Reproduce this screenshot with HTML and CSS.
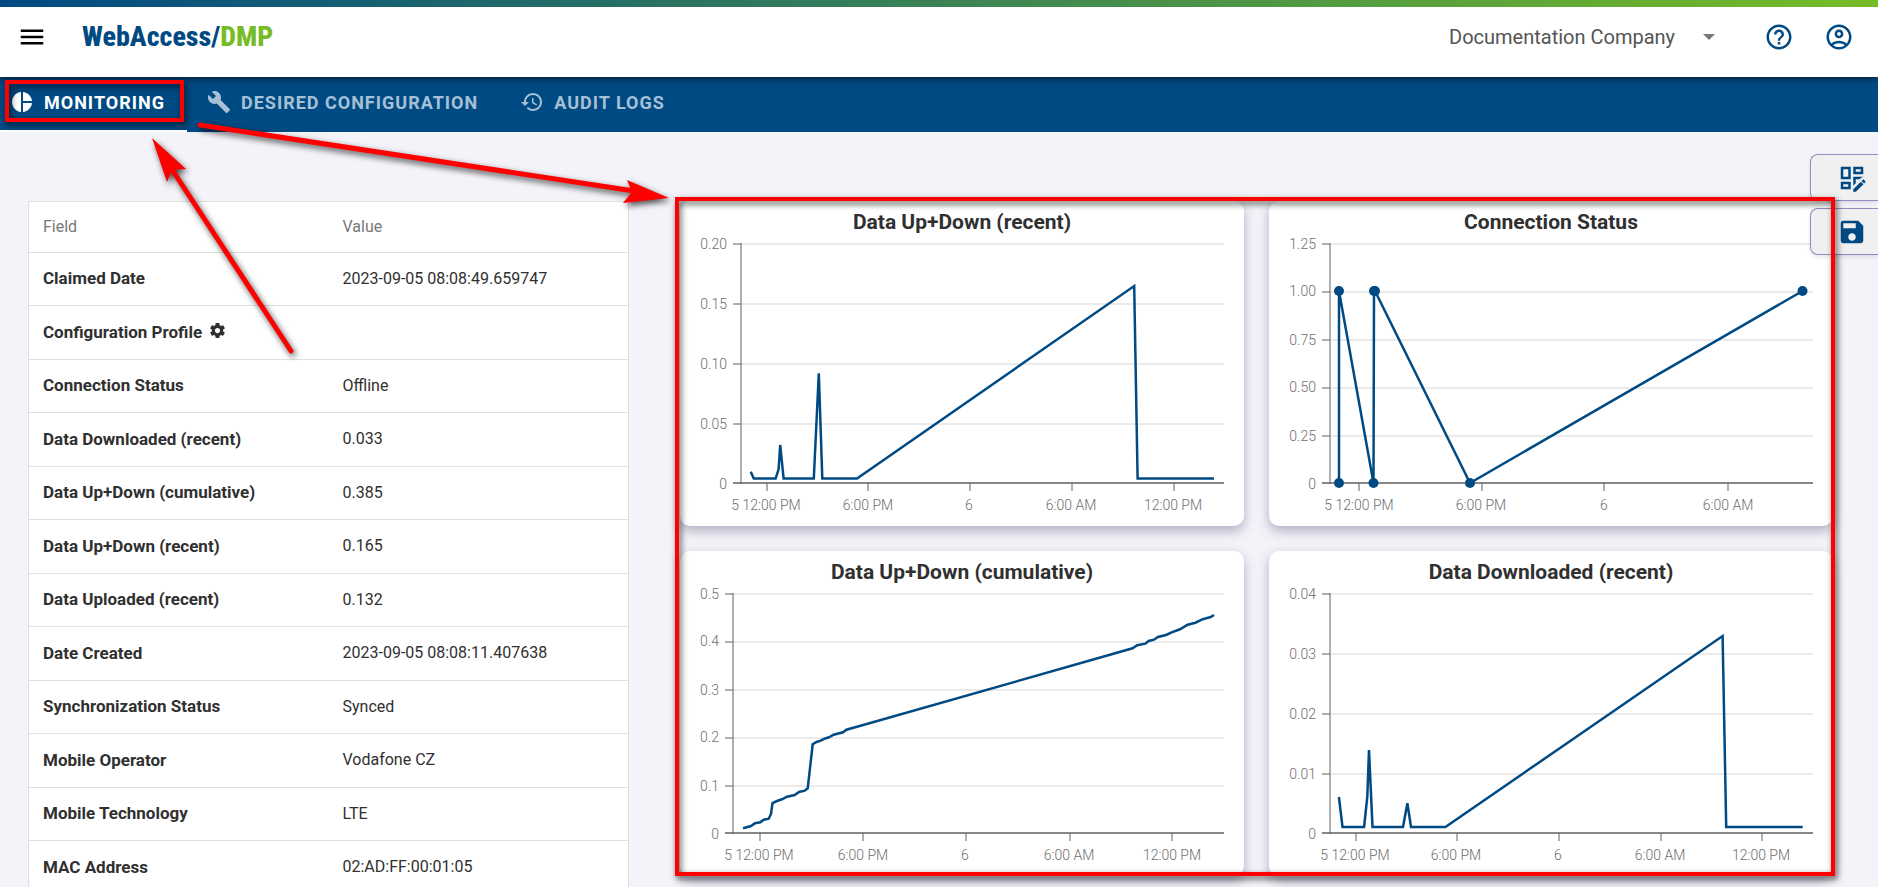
FILE: index.html
```html
<!DOCTYPE html>
<html lang="en">
<head>
<meta charset="utf-8">
<title>WebAccess/DMP</title>
<link rel="stylesheet" href="styles.css">
</head>
<body>
<div class="page">
  <header class="topbar">
    <button class="icon-btn menu-btn" aria-label="Menu"><svg class="icon" viewBox="0 0 24 24"><path d="M3 18h18v-2H3v2zm0-5h18v-2H3v2zm0-7v2h18V6H3z"/></svg></button>
    <a class="logo" href="#">WebAccess/<span class="logo-accent">DMP</span></a>
    <div class="company">
      <select class="company-select" aria-label="Company"><option>Documentation Company</option></select>
      <svg class="company-caret" viewBox="0 0 12 6"><path d="M0 0h12L6 6z"/></svg>
    </div>
    <button class="icon-btn" aria-label="Help"><svg class="icon" viewBox="0 0 24 24"><path d="M11 18h2v-2h-2v2zm1-16C6.480 2 2 6.480 2 12s4.480 10 10 10 10-4.480 10-10S17.520 2 12 2zm0 18c-4.410 0-8-3.590-8-8s3.590-8 8-8 8 3.590 8 8-3.590 8-8 8zm0-14c-2.210 0-4 1.790-4 4h2c0-1.100.9-2 2-2s2 .9 2 2c0 2-3 1.750-3 5h2c0-2.250 3-2.500 3-5 0-2.210-1.790-4-4-4z"/></svg></button>
    <button class="icon-btn" aria-label="Account"><svg class="icon" viewBox="0 0 24 24"><path d="M12 2C6.480 2 2 6.480 2 12s4.480 10 10 10 10-4.480 10-10S17.520 2 12 2zM7.350 18.500C8.660 17.560 10.260 17 12 17s3.340.56 4.650 1.500C15.340 19.440 13.740 20 12 20s-3.340-.56-4.650-1.500zm10.790-1.380C16.450 15.800 14.320 15 12 15s-4.450.8-6.140 2.120C4.700 15.730 4 13.950 4 12c0-4.420 3.580-8 8-8s8 3.580 8 8c0 1.950-.7 3.730-1.860 5.120zM12 6c-1.930 0-3.500 1.570-3.500 3.500S10.070 13 12 13s3.500-1.570 3.500-3.500S13.930 6 12 6zm0 5c-.83 0-1.500-.67-1.500-1.500S11.170 8 12 8s1.500.67 1.500 1.500S12.830 11 12 11z"/></svg></button>
  </header>

  <nav class="tabs">
    <a class="tab tab-active" href="#monitoring"><svg class="tab-icon" viewBox="0 0 24 24"><path d="M11 2v20c-5.070-.5-9-4.790-9-10s3.930-9.500 9-10zm2.030 0v8.990H22c-.47-4.740-4.240-8.520-8.970-8.990zm0 11.010V22c4.740-.47 8.500-4.250 8.970-8.990h-8.970z"/></svg>MONITORING</a>
    <a class="tab" href="#desired"><svg class="tab-icon" viewBox="0 0 24 24"><path d="M22.700 19l-9.100-9.100c.9-2.300.4-5-1.500-6.900-2-2-5-2.400-7.400-1.300L9 6 6 9 1.600 4.700C.4 7.100.9 10.100 2.900 12.100c1.900 1.900 4.600 2.400 6.900 1.500l9.100 9.100c.4.4 1 .4 1.400 0l2.300-2.300c.5-.4.5-1.100.1-1.400z"/></svg>DESIRED CONFIGURATION</a>
    <a class="tab" href="#audit"><svg class="tab-icon" viewBox="0 0 24 24"><path d="M13 3c-4.970 0-9 4.030-9 9H1l3.890 3.890.07.14L9 12H6c0-3.870 3.130-7 7-7s7 3.130 7 7-3.130 7-7 7c-1.930 0-3.680-.79-4.940-2.060l-1.420 1.420C8.270 19.990 10.510 21 13 21c4.970 0 9-4.030 9-9s-4.030-9-9-9zm-1 5v5l4.280 2.540.72-1.210-3.500-2.080V8H12z"/></svg>AUDIT LOGS</a>
  </nav>

  <main class="content">
    <table class="fields">
      <thead><tr><th scope="col">Field</th><th scope="col">Value</th></tr></thead>
      <tbody>
        <tr><th scope="row">Claimed Date</th><td>2023-09-05 08:08:49.659747</td></tr>
        <tr><th scope="row">Configuration Profile <svg class="gear" viewBox="2 2 20 20"><path d="M19.430 12.980c.04-.32.07-.64.07-.98s-.03-.66-.07-.98l2.110-1.650c.19-.15.24-.42.12-.64l-2-3.460c-.12-.22-.39-.3-.61-.22l-2.490 1c-.52-.4-1.080-.73-1.690-.98l-.38-2.650C14.460 2.180 14.250 2 14 2h-4c-.25 0-.46.18-.49.42l-.38 2.650c-.61.25-1.170.59-1.690.98l-2.490-1c-.23-.09-.49 0-.61.22l-2 3.460c-.13.22-.07.49.12.64l2.110 1.650c-.04.32-.07.65-.07.98s.03.66.07.98l-2.110 1.650c-.19.15-.24.42-.12.64l2 3.460c.12.22.39.3.61.22l2.490-1c.52.4 1.080.73 1.690.98l.38 2.650c.03.24.24.42.49.42h4c.25 0 .46-.18.49-.42l.38-2.650c.61-.25 1.170-.59 1.690-.98l2.490 1c.23.09.49 0 .61-.22l2-3.460c.12-.22.07-.49-.12-.64l-2.110-1.650zM12 15.500c-1.930 0-3.500-1.570-3.500-3.500s1.570-3.500 3.500-3.500 3.500 1.570 3.500 3.500-1.570 3.500-3.500 3.500z"/></svg></th><td></td></tr>
        <tr><th scope="row">Connection Status</th><td>Offline</td></tr>
        <tr><th scope="row">Data Downloaded (recent)</th><td>0.033</td></tr>
        <tr><th scope="row">Data Up+Down (cumulative)</th><td>0.385</td></tr>
        <tr><th scope="row">Data Up+Down (recent)</th><td>0.165</td></tr>
        <tr><th scope="row">Data Uploaded (recent)</th><td>0.132</td></tr>
        <tr><th scope="row">Date Created</th><td>2023-09-05 08:08:11.407638</td></tr>
        <tr><th scope="row">Synchronization Status</th><td>Synced</td></tr>
        <tr><th scope="row">Mobile Operator</th><td>Vodafone CZ</td></tr>
        <tr><th scope="row">Mobile Technology</th><td>LTE</td></tr>
        <tr><th scope="row">MAC Address</th><td>02:AD:FF:00:01:05</td></tr>
      </tbody>
    </table>

    <div class="charts">
      <section class="card">
        <svg class="chart" viewBox="0 0 564 325" role="img" aria-label="Data Up+Down (recent)">
          <text class="title" x="282" y="28">Data Up+Down (recent)</text>
          <path class="grid" d="M61 43H544M61 103H544M61 163H544M61 223H544"/>
          <path class="axis" d="M61 42V283M53 43H61M53 103H61M53 163H61M53 223H61M53 282H544M53 282H544M87 282V290M188 282V290M290 282V290M392 282V290M494 282V290"/>
          <g class="ylabels"><text x="47" y="48">0.20</text><text x="47" y="108">0.15</text><text x="47" y="168">0.10</text><text x="47" y="228">0.05</text><text x="47" y="288">0</text></g>
          <g class="xlabels"><text x="86" y="309">5 12:00 PM</text><text x="188" y="309">6:00 PM</text><text x="289" y="309">6</text><text x="391" y="309">6:00 AM</text><text x="493" y="309">12:00 PM</text></g>
          <polyline class="series" points="70.7,270.7 73.8,277.5 95.6,277.5 98.6,268.3 100.2,244 103.6,277.5 133.8,277.5 138.8,172.3 142.3,277.5 177,277.5 454.2,85 457.6,277.5 534,277.5"/>
        </svg>
      </section>
      <section class="card">
        <svg class="chart" viewBox="0 0 564 325" role="img" aria-label="Connection Status">
          <text class="title" x="282" y="28">Connection Status</text>
          <path class="grid" d="M61 43H544M61 91H544M61 139H544M61 187H544M61 235H544"/>
          <path class="axis" d="M61 42V283M53 43H61M53 91H61M53 139H61M53 187H61M53 235H61M53 282H544M53 282H544M90 282V290M213 282V290M335 282V290M459 282V290"/>
          <g class="ylabels"><text x="47" y="48">1.25</text><text x="47" y="95">1.00</text><text x="47" y="144">0.75</text><text x="47" y="191">0.50</text><text x="47" y="240">0.25</text><text x="47" y="288">0</text></g>
          <g class="xlabels"><text x="90" y="309">5 12:00 PM</text><text x="212" y="309">6:00 PM</text><text x="335" y="309">6</text><text x="459" y="309">6:00 AM</text></g>
          <polyline class="series" points="70,282 70,90 104.500,282 105,90 106,90 201,282 533.5,90"/>
          <g class="dots"><circle cx="70" cy="282" r="5"/><circle cx="70" cy="90" r="5"/><circle cx="104.500" cy="282" r="5"/><circle cx="105" cy="90" r="5"/><circle cx="106" cy="90" r="5"/><circle cx="201" cy="282" r="5"/><circle cx="533.500" cy="90" r="5"/></g>
        </svg>
      </section>
      <section class="card">
        <svg class="chart" viewBox="0 0 564 325" role="img" aria-label="Data Up+Down (cumulative)">
          <text class="title" x="282" y="28">Data Up+Down (cumulative)</text>
          <path class="grid" d="M53 43H544M53 91H544M53 139H544M53 187H544M53 235H544"/>
          <path class="axis" d="M53 42V283M45 43H53M45 91H53M45 139H53M45 187H53M45 235H53M45 282H544M45 282H544M80 282V290M183 282V290M286 282V290M390 282V290M492 282V290"/>
          <g class="ylabels"><text x="39" y="48">0.5</text><text x="39" y="95">0.4</text><text x="39" y="144">0.3</text><text x="39" y="191">0.2</text><text x="39" y="240">0.1</text><text x="39" y="288">0</text></g>
          <g class="xlabels"><text x="79" y="309">5 12:00 PM</text><text x="183" y="309">6:00 PM</text><text x="285" y="309">6</text><text x="389" y="309">6:00 AM</text><text x="492" y="309">12:00 PM</text></g>
          <polyline class="series" points="63,277.3 71,275 75,272.3 80.3,271.3 83.7,268.7 88.7,267.7 91,263 92.5,252 97,250 102,248.3 107,245.7 114.7,244 119,241 124.7,239.7 127.7,237.3 132.7,193.3 136.5,191 140.7,189.7 144.5,187.7 149,186.3 153.7,183.7 163,181.3 166.4,178.7 183.2,174 452.6,97.3 457.2,94.3 465.3,92.7 468.7,90 474,88.7 478,86 486,84 491.7,81.3 500,78.3 507.7,73.7 515.4,71.7 522.3,68.3 530.7,66 534,64"/>
        </svg>
      </section>
      <section class="card">
        <svg class="chart" viewBox="0 0 564 325" role="img" aria-label="Data Downloaded (recent)">
          <text class="title" x="282" y="28">Data Downloaded (recent)</text>
          <path class="grid" d="M61 43H544M61 103H544M61 163H544M61 223H544"/>
          <path class="axis" d="M61 42V283M53 43H61M53 103H61M53 163H61M53 223H61M53 282H544M53 282H544M87 282V290M188 282V290M290 282V290M392 282V290M493 282V290"/>
          <g class="ylabels"><text x="47" y="48">0.04</text><text x="47" y="108">0.03</text><text x="47" y="168">0.02</text><text x="47" y="228">0.01</text><text x="47" y="288">0</text></g>
          <g class="xlabels"><text x="86" y="309">5 12:00 PM</text><text x="187" y="309">6:00 PM</text><text x="289" y="309">6</text><text x="391" y="309">6:00 AM</text><text x="492" y="309">12:00 PM</text></g>
          <polyline class="series" points="69.9,246 73.5,276 95.1,276 98.3,245.7 100,199 103.5,276 134,276 138.4,252.3 142,276 176.4,276 453.6,85 457.2,276 533.7,276"/>
        </svg>
      </section>
    </div>
  </main>

  <div class="side-actions">
    <button class="side-btn" aria-label="Edit dashboard"><svg class="icon" viewBox="0 0 24 24"><path d="M21 13.100c-.1 0-.3.1-.4.2l-1 1 2.100 2.100 1-1c.2-.2.2-.6 0-.8l-1.300-1.300c-.1-.1-.2-.2-.4-.2M19.100 14.900L13 20.900V23h2.100l6.100-6.100-2.100-2M21 3h-8v6h8V3M19 7h-4V5h4v2M13 18.100V11h8v.1c-.6 0-1.300.3-1.800.8L18.100 13H15v3.100l-2 2M11 3H3v10h8V3M9 11H5V5h4v6M11 15H3v6h8v-6M9 19H5v-2h4v2z"/></svg></button>
    <button class="side-btn" aria-label="Save"><svg class="icon" viewBox="0 0 24 24"><path d="M17 3H5c-1.110 0-2 .9-2 2v14c0 1.100.89 2 2 2h14c1.100 0 2-.9 2-2V7l-4-4zm-5 16c-1.660 0-3-1.340-3-3s1.340-3 3-3 3 1.340 3 3-1.340 3-3 3zm3-10H5V5h10v4z"/></svg></button>
  </div>

  <svg class="arrows" width="700" height="400" aria-hidden="true">
    <path class="shaft" d="M291 351L171 168M200 125L634 191"/>
    <path class="head" d="M152 138L186 169L172 170L167 182zM669 198L627 180L632 192L623 203z"/>
  </svg>
  <div class="mark mark-tab"></div>
  <div class="mark mark-charts"></div>
</div>
</body>
</html>
```

FILE: styles.css
```css
* { box-sizing: border-box; }

body {
  margin: 0;
  background: #f4f3f9;
  color: #303030;
  font-family: Roboto, "Liberation Sans", sans-serif;
  font-size: 16px;
}

.page {
  position: relative;
  height: 100vh;
  overflow: hidden;
}

/* Header */
.topbar {
  position: relative;
  display: flex;
  align-items: center;
  gap: 20px;
  padding: 17px 19px 20px 12px;
  background: #fff;
  box-shadow: 0 2px 6px rgba(0, 0, 0, 0.6);
  z-index: 1;
}
.topbar::before {
  content: "";
  position: absolute;
  inset: 0 0 auto;
  height: 7px;
  background: linear-gradient(90deg, #004a84, #76bc26);
}
.icon-btn {
  display: flex;
  align-items: center;
  justify-content: center;
  width: 40px;
  height: 40px;
  padding: 0;
  border: 0;
  background: none;
  color: #004a84;
}
.menu-btn { color: #000; }
.icon {
  width: 30px;
  height: 30px;
  fill: currentColor;
}
.logo {
  margin-left: 10px;
  color: #004a84;
  font: 800 28px/32px "Liberation Sans Narrow", "Roboto Condensed", "Liberation Sans", sans-serif;
  text-decoration: none;
}
.logo-accent { color: #76bc26; }
.company {
  position: relative;
  display: flex;
  align-items: center;
  margin-left: auto;
  margin-right: 24px;
}
.company-select {
  appearance: none;
  width: 266px;
  padding: 0;
  border: 0;
  background: none;
  color: #555;
  font: 20px/24px Roboto, sans-serif;
}
.company-caret {
  position: absolute;
  right: 0;
  width: 12px;
  height: 6px;
  fill: #777;
  pointer-events: none;
}

/* Tabs */
.tabs {
  display: flex;
  height: 55px;
  background: #004a84;
}
.tab {
  display: flex;
  align-items: center;
  gap: 10px;
  padding: 0 22px 5px 20px;
  color: #a6c0d5;
  font-size: 18px;
  font-weight: 700;
  letter-spacing: 1px;
  text-decoration: none;
}
.tab:first-child { padding-left: 10px; }
.tab-active {
  color: #fff;
  box-shadow: inset 0 -2px #fff;
}
.tab-icon {
  width: 24px;
  height: 24px;
  fill: currentColor;
}

/* Content */
.content {
  display: grid;
  grid-template-columns: minmax(0, 601px) minmax(0, 1fr);
  align-items: start;
  gap: 51px;
  padding: 69px 45px 25px 28px;
}
.fields {
  width: 100%;
  border-collapse: collapse;
  table-layout: fixed;
  background: #fff;
  border: 1px solid #e0e0e0;
  text-align: left;
}
.fields th,
.fields td {
  height: 53px;
  padding: 0 14px 2px;
  border-bottom: 1px solid #e0e0e0;
}
.fields tr:nth-child(even) th { height: 54px; }
.fields thead th {
  height: 51px;
  color: #777;
  font-weight: 400;
}
.fields tbody th {
  font-size: 17px;
  font-weight: 700;
}
.gear {
  width: 15px;
  height: 15px;
  margin-left: 4px;
  fill: currentColor;
}

.charts {
  display: grid;
  grid-template-columns: repeat(2, minmax(0, 1fr));
  gap: 25px;
}
.card {
  border-radius: 10px;
  background: #fff;
  box-shadow: 0 5px 12px rgba(50, 50, 90, 0.35);
}
.chart {
  display: block;
  width: 100%;
}
.title {
  fill: #303030;
  font-size: 21px;
  font-weight: 700;
  text-anchor: middle;
}
.grid {
  fill: none;
  stroke: #d6d6d6;
}
.axis {
  fill: none;
  stroke: #606060;
}
.ylabels,
.xlabels {
  fill: #6e6e6e;
  font-size: 14px;
  font-weight: 300;
}
.ylabels { text-anchor: end; }
.xlabels { text-anchor: middle; }
.series {
  fill: none;
  stroke: #004a84;
  stroke-width: 2.500px;
}
.dots { fill: #004a84; }

/* Floating actions on the right edge */
.side-actions {
  position: absolute;
  top: 154px;
  right: 0;
  display: grid;
  gap: 7px;
}
.side-btn {
  display: flex;
  align-items: center;
  width: 68px;
  height: 47px;
  padding: 0 0 0 26px;
  border: 1px solid #8c90bf;
  border-right: 0;
  border-radius: 8px 0 0 8px;
  background: #f0f0f0;
  color: #004a84;
  box-shadow: 0 2px 4px rgba(0, 0, 0, 0.1);
}

/* Annotations drawn over the page */
.arrows {
  position: absolute;
  top: 0;
  left: 0;
  z-index: 2;
  pointer-events: none;
  filter: drop-shadow(2px 3px 3px rgba(0, 0, 0, 0.7));
}
.shaft {
  stroke: #f00;
  stroke-width: 5px;
  stroke-linecap: round;
}
.head { fill: #f00; }
.mark {
  position: absolute;
  z-index: 2;
  border: 4px solid #f00;
  pointer-events: none;
  filter: drop-shadow(2px 3px 3px rgba(0, 0, 0, 0.7));
}
.mark-tab {
  top: 80px;
  left: 5px;
  width: 179px;
  height: 42px;
}
.mark-charts {
  top: 197px;
  left: 675px;
  right: 43px;
  height: 679px;
}
```
